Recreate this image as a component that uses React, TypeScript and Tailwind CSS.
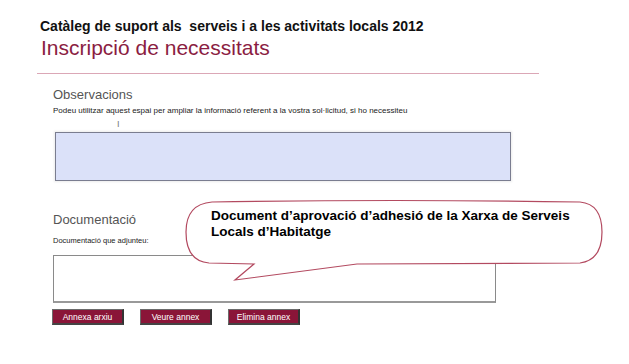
import React from 'react'

const BUTTONS = ['Annexa arxiu', 'Veure annex', 'Elimina annex']

function Callout() {
  return (
    <div className="absolute left-[184px] top-[199px] w-[422px] h-[84px]">
      <svg width="422" height="84" viewBox="0 0 422 84" className="absolute inset-0">
        <path
          d="M 28 3 Q 210 0 396 3 Q 418 5 418 33 Q 418 61 396 64 L 173 65 L 51 81 L 70 65 L 25 64 Q 2 62 2 33 Q 2 5 28 3 Z"
          fill="#ffffff"
          stroke="#b34a60"
          strokeWidth="1.2"
        />
      </svg>
      <p className="relative pl-[27px] pt-[9px] text-[13.5px] leading-[16px] font-bold text-black w-[410px]">
        Document d’aprovació d’adhesió de la Xarxa de Serveis
        <br />
        Locals d’Habitatge
      </p>
    </div>
  )
}

export default function App() {
  return (
    <div className="relative w-[629px] h-[364px] overflow-hidden bg-white font-['Liberation_Sans',Arial,sans-serif]">
      {/* Header */}
      <div className="pl-[40px] pt-[17px]">
        <h1 className="text-[14px] leading-[18px] font-bold text-[#111]">
          Catàleg de suport als&nbsp; serveis i a les activitats locals 2012
        </h1>
        <h2 className="pl-[1px] text-[21px] leading-[26px] text-[#8b1d42]">Inscripció de necessitats</h2>
      </div>
      <div className="ml-[37px] mt-[12px] w-[502px] h-px bg-[#dba7b6]" />

      {/* Observacions */}
      <section className="pl-[53px] pt-[13px]">
        <h3 className="text-[13px] leading-[16px] text-[#555]">Observacions</h3>
        <p className="mt-[3px] text-[8px] leading-[10px] text-[#222]">
          Podeu utilitzar aquest espai per ampliar la informació referent a la vostra sol·licitud, si ho necessiteu
        </p>
        <div className="h-[16px] pl-[64px] pt-[3px] text-[9px] leading-[10px] text-[#777]">I</div>
        <div className="ml-[2px] w-[456px] h-[49px] bg-[#dbe1f9] border border-[#7a7d90] shadow-[0_0_2px_1px_rgba(0,0,0,0.08)]" />
      </section>

      {/* Documentació */}
      <section className="pl-[53px] pt-[31px]">
        <h3 className="text-[13px] leading-[16px] text-[#555]">Documentació</h3>
        <p className="mt-[8px] text-[7.5px] leading-[10px] text-[#222]">Documentació que adjunteu:</p>
        <div className="mt-[9px] w-[443px] h-[48px] bg-white border border-[#8a8a8a] border-b-2 border-b-[#999]" />
        <div className="mt-[6px] flex gap-[16px] -ml-[1px]">
          {BUTTONS.map((label) => (
            <button
              key={label}
              className="w-[72px] h-[16px] bg-[#8a1538] border border-[#6b6b6b] border-r-2 border-b-2 border-r-[#333] border-b-[#444] text-white text-[8.5px] leading-[12px]"
            >
              {label}
            </button>
          ))}
        </div>
      </section>

      <Callout />
    </div>
  )
}
